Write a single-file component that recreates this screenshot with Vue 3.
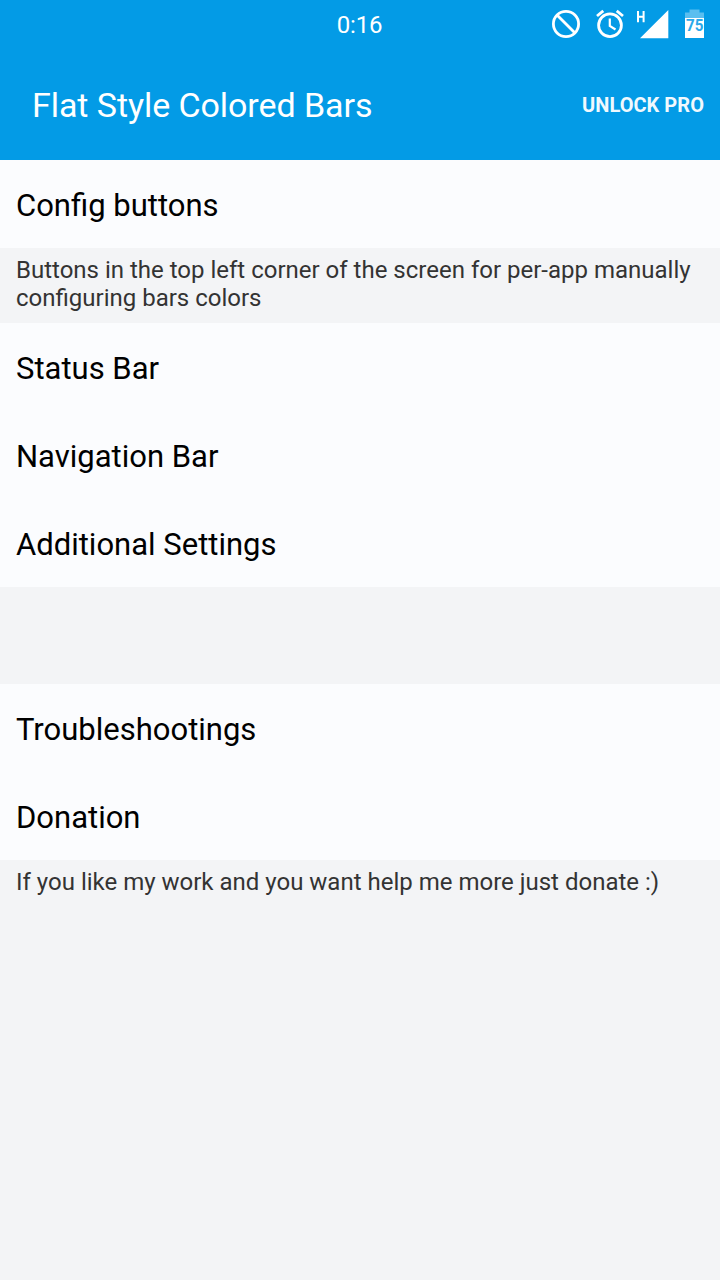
<template>
  <div class="screen">
    <header class="top">
      <div class="status-bar">
        <span class="clock">0:16</span>
        <svg class="status-icons" width="170" height="48" viewBox="550 0 170 48">
          <g fill="none" stroke="#fff" stroke-width="2.8">
            <circle cx="566" cy="24" r="12.6" />
            <path d="M557 15L575 33" />
            <circle cx="610" cy="25.3" r="11.4" />
            <path d="M609.8 18.5V26L615.5 29.5" stroke-width="2.2" />
            <path d="M597 16L603.3 10.8M623 16L616.7 10.8" />
          </g>
          <path d="M668.3 10V38.3H640Z" fill="#fff" />
          <path d="M638 11V22.3M643.6 11V22.3M638 16.8H643.6" fill="none" stroke="#fff" stroke-width="2" />
          <path d="M689.5 9.5H699.5V12.5H704V18H685V12.5H689.5Z" fill="#fff" opacity="0.35" />
          <path d="M685 18H704V38H685Z" fill="#fff" />
          <text
            x="686"
            y="30.6"
            textLength="17.4"
            lengthAdjust="spacingAndGlyphs"
            class="battery-text"
          >75</text>
        </svg>
      </div>
      <div class="toolbar">
        <h1>Flat Style Colored Bars</h1>
        <button>UNLOCK PRO</button>
      </div>
    </header>

    <main>
      <section v-for="(group, i) in groups" :key="i">
        <div v-for="item in group.items" :key="item" class="item">{{ item }}</div>
        <p v-if="group.note" class="note">{{ group.note }}</p>
        <div v-else class="gap"></div>
      </section>
    </main>
  </div>
</template>

<script setup>
const groups = [
  {
    items: ['Config buttons'],
    note: 'Buttons in the top left corner of the screen for per-app manually configuring bars colors'
  },
  { items: ['Status Bar', 'Navigation Bar', 'Additional Settings'] },
  {
    items: ['Troubleshootings', 'Donation'],
    note: 'If you like my work and you want help me more just donate :)'
  }
]
</script>

<style>
body {
  background: #f3f4f6;
}
</style>

<style scoped>
.screen {
  min-height: 1280px;
  background: #f3f4f6;
  font-family: Roboto, sans-serif;
}

.top {
  background: #039be6;
  color: #fff;
}

.status-bar {
  display: grid;
  grid-template-columns: 1fr auto 1fr;
  align-items: center;
  height: 48px;
}

.clock {
  grid-column: 2;
  padding: 2px 1px 0 0;
  font-size: 24px;
  letter-spacing: -0.2px;
}

.status-icons {
  justify-self: end;
}

.battery-text {
  font-size: 16.5px;
  font-weight: 700;
  fill: #2aa9ea;
}

.toolbar {
  display: flex;
  align-items: center;
  justify-content: space-between;
  height: 112px;
  padding: 2px 16px 0 32px;
  box-sizing: border-box;
}

h1 {
  margin: 0;
  font-size: 34px;
  font-weight: 400;
  letter-spacing: -0.07px;
}

button {
  padding: 0;
  border: 0;
  background: none;
  color: #f0f9fe;
  font-family: inherit;
  font-size: 20px;
  font-weight: 700;
  letter-spacing: 0.04px;
}

.item {
  height: 88px;
  padding: 2px 16px 0;
  box-sizing: border-box;
  background: #fbfcfe;
  color: #000;
  font-size: 31px;
  line-height: 88px;
}

.note {
  margin: 0;
  padding: 8px 16px 11px;
  color: #333;
  font-size: 24px;
  line-height: 28px;
}

.gap {
  height: 97px;
}
</style>
